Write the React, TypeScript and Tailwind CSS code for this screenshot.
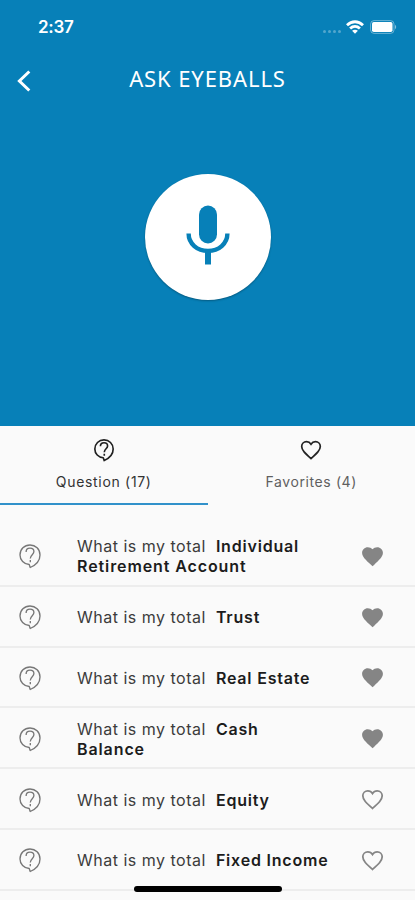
import React from "react";

const questions = [
  { lines: ["Individual", "Retirement Account"], favorite: true },
  { lines: ["Trust"], favorite: true },
  { lines: ["Real Estate"], favorite: true },
  { lines: ["Cash", "Balance"], favorite: true },
  { lines: ["Equity"], favorite: false },
  { lines: ["Fixed Income"], favorite: false },
];

function QuestionIcon({ className, weight = 1.5 }: { className: string; weight?: number }) {
  return (
    <svg viewBox="0 0 24 26" className={className} fill="none" stroke="currentColor" strokeWidth={weight} strokeLinejoin="round">
      <path d="M11.2 21.5C5.9 21.1 2 17 2 11.9 2 6.3 6.4 2 12 2s10 4.3 10 9.9c0 5-3.9 9.9-9.8 12.6l-1-3z" />
      <path d="M8.1 8.9c0-2.2 1.6-3.8 3.9-3.8s3.9 1.5 3.9 3.5c0 3-3.6 3.2-3.6 6.9M12.3 17.1v2.1" />
    </svg>
  );
}

function HeartIcon({ className, filled = false }: { className: string; filled?: boolean }) {
  return (
    <svg viewBox="0 0 24 24" className={className} fill="currentColor">
      {filled ? (
        <path d="M12 21.35l-1.45-1.32C5.4 15.36 2 12.28 2 8.5 2 5.42 4.42 3 7.5 3c1.74 0 3.41.81 4.5 2.09C13.09 3.81 14.76 3 16.5 3 19.58 3 22 5.42 22 8.5c0 3.78-3.4 6.86-8.55 11.54L12 21.35z" />
      ) : (
        <path d="M12 20.6C6 15.2 2.7 12.2 2.7 8.5c0-2.8 2.1-4.8 4.8-4.8 1.8 0 3.5.9 4.5 2.5 1-1.6 2.7-2.5 4.5-2.5 2.7 0 4.8 2 4.8 4.8 0 3.7-3.3 6.7-9.3 12.1z" fill="none" stroke="currentColor" strokeWidth="1.7" />
      )}
    </svg>
  );
}

function StatusBar() {
  return (
    <div className="flex h-[54px] items-center justify-between pl-[38px] pr-[18px] text-white">
      <span className="text-[17px] font-semibold leading-5 tracking-[-0.3px]">2:37</span>
      <div className="flex items-center">
        <div className="mr-[5px] mt-[8px] flex gap-[2px] opacity-30">
          {[0, 1, 2, 3].map((i) => <i key={i} className="size-[3px] rounded-full bg-white" />)}
        </div>
        <svg viewBox="0 0 18 14" className="mr-[6px] h-[14px] w-[18px]" fill="none" stroke="white" strokeWidth="2.8">
          <path d="M1 5.2C5.8.6 12.2.6 17 5.2M4.1 8.5c3-2.8 6.8-2.8 9.8 0" />
          <path d="M9 13.8l-2.9-3c1.7-1.4 4.1-1.4 5.8 0z" fill="white" stroke="none" />
        </svg>
        <svg viewBox="0 0 27 14" className="h-[14px] w-[27px]">
          <rect x=".6" y=".6" width="23.4" height="12.8" rx="3.5" fill="none" stroke="white" strokeOpacity=".4" />
          <rect x="2" y="2" width="20.5" height="10" rx="1.8" fill="white" />
          <path d="M25 4.8c1.6.7 1.6 3.7 0 4.4z" fill="white" fillOpacity=".5" />
        </svg>
      </div>
    </div>
  );
}

export default function App() {
  return (
    <div className="relative flex h-[900px] w-[415px] flex-col overflow-hidden bg-[#fafafa] font-['Inter',sans-serif]">
      <header className="h-[426px] shrink-0 bg-[#0780b8]">
        <StatusBar />
        <div className="grid h-[53px] grid-cols-[50px_1fr_50px] items-center">
          <svg viewBox="0 0 16 24" className="ml-[16px] h-6 w-4" fill="none" stroke="white" strokeWidth="3">
            <path d="M13.3 2.5L3.4 12l9.9 9.5" />
          </svg>
          <h1 className="mb-[5px] whitespace-nowrap text-center font-['Noto_Sans',sans-serif] text-[22px] font-normal leading-6 tracking-[0.9px] text-white">ASK EYEBALLS</h1>
        </div>
        <button className="mx-auto mt-[67px] flex size-[126px] items-center justify-center rounded-full bg-white pb-[4px] shadow-[0_1px_2px_rgba(0,0,0,0.3)]">
          <svg viewBox="0 0 44 60" className="h-[60px] w-[44px]" fill="none" stroke="#0780b8">
            <rect x="13" y="0.5" width="18" height="38" rx="9" fill="#0780b8" stroke="none" />
            <path d="M2.6 28.6c0 10.1 8.6 17.3 19.4 17.3S41.4 38.7 41.4 28.6" strokeWidth="4.4" />
            <path d="M22 46v13.5" strokeWidth="6" />
          </svg>
        </button>
      </header>
      <nav className="grid h-[79px] shrink-0 grid-cols-2 text-[14px] leading-5">
        <div className="flex flex-col items-center border-b-2 border-[#3191ca] pt-[12px] text-[#333]">
          <QuestionIcon className="h-[24px] w-[22px] text-[#202020]" weight={1.8} />
          <span className="mt-[10px] tracking-[0.68px]">Question (17)</span>
        </div>
        <div className="flex flex-col items-center pt-[12px] text-[#5f5f5f]">
          <HeartIcon className="size-[24px] text-[#242424]" />
          <span className="mt-[10px] tracking-[0.6px]">Favorites (4)</span>
        </div>
      </nav>
      <main className="mt-[21px] shrink-0">
        {questions.map(({ lines, favorite }) => (
          <div key={lines[0]} className="grid h-[60.8px] grid-cols-[77px_260px_78px] items-center border-b-2 border-[#ededed] pt-[2px] text-[#3c3c3c]">
            <QuestionIcon className="ml-[18px] h-[26px] w-[24px] text-[#777]" weight={1.35} />
            <div className="text-[16px] leading-5 tracking-[0.5px]">
              <div className="flex gap-[10px]">
                <span>What is my total</span>
                <strong className="font-semibold tracking-[0.8px] text-[#1c1c1c]">{lines[0]}</strong>
              </div>
              {lines[1] && <strong className="block font-semibold tracking-[0.9px] text-[#1c1c1c]">{lines[1]}</strong>}
            </div>
            <HeartIcon className="ml-[23px] size-[25px] text-[#858585]" filled={favorite} />
          </div>
        ))}
      </main>
      <div className="absolute left-[134px] top-[886px] h-[6px] w-[148px] rounded-full bg-black" />
    </div>
  );
}
